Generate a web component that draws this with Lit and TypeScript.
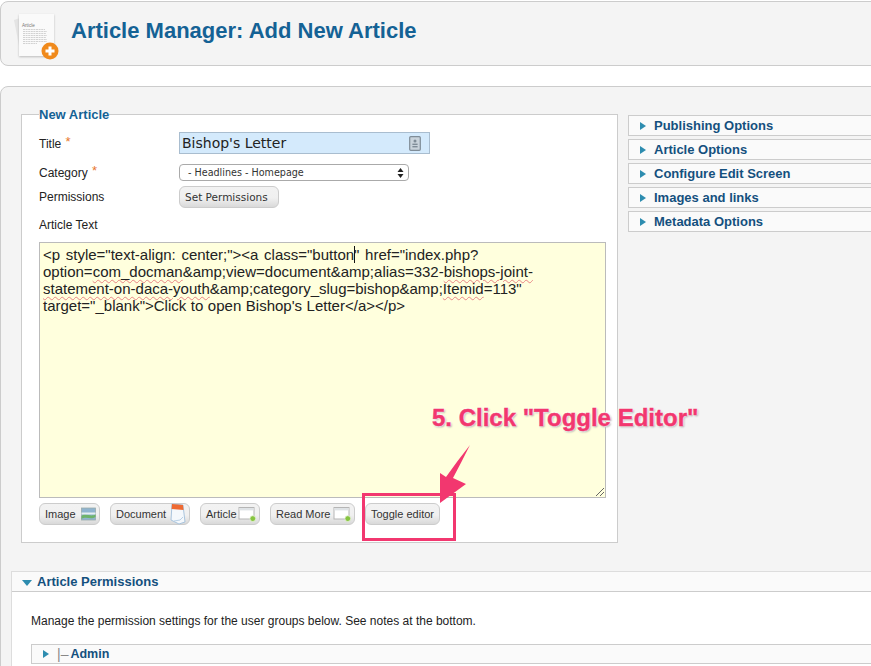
import { LitElement, html, css, svg } from "lit";
import { customElement } from "lit/decorators.js";

const arrow = html`<span class="arr"></span>`;

const docIcon = svg`<svg class="logo" width="62" height="58" viewBox="0 0 62 58">
  <defs><filter id="s" x="-20%" y="-20%" width="140%" height="140%"><feGaussianBlur stdDeviation="1.2"/></filter></defs>
  <path d="M13 15 L19 13 L24 50 L20 51 Z" fill="#e4e4e4"/>
  <rect x="18" y="10" width="35" height="42" fill="#bbb" filter="url(#s)"/>
  <rect x="18" y="9" width="35" height="42" fill="#fafafa"/>
  <text x="21" y="22" font-size="4.6" font-family="Liberation Sans" fill="#777">Article</text>
  <path d="M22 24.5h22M22 26.5h24M22 28.5h23M22 30.5h24M22 32.5h23M22 34.5h24M22 36.5h24M22 38.5h14" stroke="#aaa" stroke-width=".5" stroke-dasharray="2 .6"/>
  <circle cx="49" cy="46" r="8.5" fill="#f08a1c"/>
  <path d="M49 41.5v9M44.5 46h9" stroke="#fff" stroke-width="3"/>
</svg>`;

const imgIcon = svg`<svg width="15" height="14" viewBox="0 0 15 14"><rect x=".5" y="1" width="14" height="12" fill="#8fb4cf" stroke="#9aa" stroke-width=".8"/><path d="M.5 9 C5 5 10 11 14.5 7 V10 C10 13 5 9 .5 12Z" fill="#6eb36a"/><rect x=".5" y="5.5" width="14" height="2" fill="#e6eef2"/></svg>`;
const docuIcon = svg`<svg width="18" height="22" viewBox="0 0 18 22"><path d="M3 1 L14 2 L16 19 L10 21 L2 17Z" fill="#f4f8fc" stroke="#a9c4dd"/><path d="M3 1 L14 2 L14.5 7 L2.6 6Z" fill="#ee6a32"/><path d="M5 18l6-1 3-3" fill="none" stroke="#b8d0e6"/></svg>`;
const addIcon = svg`<svg width="19" height="16" viewBox="0 0 19 16"><rect x="1" y="1.5" width="15" height="11.5" fill="#fff" stroke="#b5b5b5"/><rect x="1.5" y="2" width="14" height="2.4" fill="#dfe3e6"/><circle cx="14.8" cy="12.6" r="2.9" fill="#86c440" stroke="#e8f4d8" stroke-width=".8"/></svg>`;

@customElement("app-root")
export class AppRoot extends LitElement {
  static styles = css`
    :host { display: block; }
    * { box-sizing: border-box; }
    .page { position: relative; width: 871px; height: 666px; overflow: hidden; background: #fff; font-family: "Liberation Sans", Arial, sans-serif; padding-top: 1px; color: #222; }
    .header { height: 65px; margin-right: -12px; background: #f4f4f4; border: 1px solid #ccc; border-radius: 8px; display: flex; align-items: center; gap: 8px; padding: 0; }
    .logo { flex: none; }
    h1 { margin: 0 0 5px; font-size: 22px; line-height: 30px; font-weight: bold; color: #146295; }
    .main { margin-top: 20px; margin-right: -12px; height: 600px; background: #f4f4f4; border: 1px solid #ccc; border-radius: 8px; padding: 20px 0 0 20px; }
    .cols { display: flex; align-items: flex-start; gap: 10px; }
    fieldset { flex: none; width: 597px; height: 436px; margin: 0; padding: 8px 11px 0 17px; background: #fff; border: 1px solid #ccc; min-width: 0; }
    legend { padding: 0; margin: 0; font-size: 13px; line-height: 15px; font-weight: bold; color: #146295; }
    .row { display: flex; align-items: center; font-size: 12px; color: #222; }
    .lab { width: 140px; flex: none; }
    .req { color: #e8772e; font-size: 13px; position: relative; top: -2px; margin-left: 1px; }
    .r1 { height: 22px; margin-top: 2px; }
    .r2 { height: 17px; margin-top: 10px; }
    .r3 { height: 22px; margin-top: 5px; }
    .r4 { height: 16px; margin-top: 9px; margin-bottom: 9px; }
    .title-in { width: 251px; height: 22px; background: #d4eafc; border: 1px solid #a9bdcf; display: flex; align-items: center; justify-content: space-between; padding: 0 8px 0 2px; font-family: "DejaVu Sans", sans-serif; font-size: 14px; color: #222; }
    .sel { width: 230px; height: 17px; background: #fff; border: 1px solid #aaa; border-radius: 4px; display: flex; align-items: center; justify-content: space-between; padding: 0 4px 0 8px; font-family: "DejaVu Sans", sans-serif; font-size: 9.6px; color: #333; }
    .btn { display: inline-flex; align-items: center; height: 22px; padding: 0 10px 0 5px; border: 1px solid #ccc; border-radius: 6px; background: linear-gradient(#f2f2f2, #f0f0f0 55%, #d9d9d9); font-size: 10.5px; color: #333; white-space: nowrap; font-family: "DejaVu Sans", sans-serif; }
    .editor { width: 567px; height: 256px; background: #ffffdd; border: 1px solid #bbb; padding: 3px 3px; font-size: 15px; line-height: 17px; color: #222; position: relative; }
    .editor p { margin: 0; white-space: nowrap; }
    .editor .l1 { word-spacing: 1.5px; }
    .editor .l4 { word-spacing: 0.4px; }
    .sp { text-decoration: underline wavy #e98585 1px; text-underline-offset: 2px; }
    .caret { border-left: 1px solid #111; margin-right: -1px; }
    .grip { position: absolute; right: 0; bottom: 0; }
    .tools { display: flex; gap: 10px; margin-top: 5px; }
    .tools .btn { font-family: "Liberation Sans", sans-serif; font-size: 11px; justify-content: space-between; padding: 0 2px 0 5px; }
    .tools .w-image { width: 61px; padding-right: 3px; }
    .tools .w-doc { width: 80px; }
    .tools .w-art { width: 60px; }
    .tools .w-more { width: 85px; }
    .tools .w-tog { width: 75px; justify-content: center; padding: 0; }
    .side { flex: 1; display: flex; flex-direction: column; gap: 3px; padding-top: 8px; }
    .acc { height: 21px; background: #fafafa; border: 1px solid #ccc; display: flex; align-items: center; padding-left: 11px; gap: 8px; font-size: 13px; font-weight: bold; color: #14507e; }
    .arr { width: 0; height: 0; border-left: 6px solid #2d8caf; border-top: 4.5px solid transparent; border-bottom: 4.5px solid transparent; flex: none; }
    .perm { margin: 28px 0 0 -10px; border: 1px solid #ddd; border-right: none; background: #fff; height: 120px; }
    .perm-h { height: 20px; background: #fafafa; border-bottom: 1px solid #ccc; display: flex; align-items: center; gap: 5px; padding-left: 10px; font-size: 13px; font-weight: bold; color: #14507e; }
    .down { width: 0; height: 0; border-top: 6px solid #2d8caf; border-left: 5px solid transparent; border-right: 5px solid transparent; margin-top: 2px; }
    .note { margin: 22px 0 0 19px; font-size: 12px; line-height: 14px; color: #222; }
    .admin { margin: 16px 0 0 19px; height: 20px; background: #fafafa; border: 1px solid #ccc; border-right: none; display: flex; align-items: center; padding-left: 11px; font-size: 12.5px; font-weight: bold; color: #14507e; }
    .tree { font-weight: normal; color: #888; margin: 0 2px 0 8px; font-size: 14px; }
    .hl { position: absolute; left: 362px; top: 493px; width: 94px; height: 48px; border: 3px solid #f2376f; }
    .shape { position: absolute; left: 0; top: 0; pointer-events: none; }
    .callout { position: absolute; left: 432px; top: 403px; font-size: 24px; line-height: 30px; font-weight: bold; color: #f2376f; -webkit-text-stroke: 0.4px #f2376f; white-space: nowrap; text-shadow: 0 0 2px #fff, 0 0 2px #fff, 0 0 3px #fff, 1px 1px 2px #888; }
  `;

  render() {
    return html`<div class="page">
      <div class="header">${docIcon}<h1>Article Manager: Add New Article</h1></div>
      <div class="main">
        <div class="cols">
          <fieldset>
            <legend>New Article</legend>
            <div class="row r1"><span class="lab">Title <span class="req">*</span></span>
              <div class="title-in"><span>Bishop's Letter</span>
                <svg width="12" height="15" viewBox="0 0 12 15"><rect x=".7" y=".7" width="10.6" height="13.6" rx="1" fill="#c9d3db" stroke="#7f8c97" stroke-width="1.2"/><circle cx="6" cy="5" r="1.5" fill="#7f8c97"/><rect x="3.4" y="7.6" width="5.2" height="1.4" fill="#7f8c97"/><rect x="3.4" y="10" width="5.2" height="1.4" fill="#7f8c97"/></svg>
              </div></div>
            <div class="row r2"><span class="lab">Category <span class="req">*</span></span>
              <div class="sel"><span>- Headlines - Homepage</span>
                <svg width="7" height="10" viewBox="0 0 7 10"><path d="M3.5 0L6.5 4H.5ZM3.5 10L.5 6h6Z" fill="#222"/></svg>
              </div></div>
            <div class="row r3"><span class="lab">Permissions</span><span class="btn">Set Permissions</span></div>
            <div class="row r4"><span class="lab">Article Text</span></div>
            <div class="editor">
              <p class="l1">&lt;p style="text-align: center;"&gt;&lt;a class="button<span class="caret"></span>" href="index.php?</p>
              <p>option=<span class="sp">com_docman</span>&amp;amp;view=document&amp;amp;alias=332-<span class="sp">bishops-joint-</span></p>
              <p><span class="sp">statement-on-daca-youth</span>&amp;amp;category_slug=bishop&amp;amp;<span class="sp">Itemid</span>=113"</p>
              <p class="l4">target="_blank"&gt;Click to open Bishop's Letter&lt;/a&gt;&lt;/p&gt;</p>
              <svg class="grip" width="10" height="10" viewBox="0 0 10 10"><path d="M1 9L9 1M5 9L9 5" stroke="#666" fill="none"/></svg>
            </div>
            <div class="tools">
              <span class="btn w-image">Image ${imgIcon}</span>
              <span class="btn w-doc">Document ${docuIcon}</span>
              <span class="btn w-art">Article ${addIcon}</span>
              <span class="btn w-more">Read More ${addIcon}</span>
              <span class="btn w-tog">Toggle editor</span>
            </div>
          </fieldset>
          <div class="side">
            ${["Publishing Options", "Article Options", "Configure Edit Screen", "Images and links", "Metadata Options"].map((t) => html`<div class="acc">${arrow}<span>${t}</span></div>`)}
          </div>
        </div>
        <div class="perm">
          <div class="perm-h"><span class="down"></span><span>Article Permissions</span></div>
          <div class="note">Manage the permission settings for the user groups below. See notes at the bottom.</div>
          <div class="admin">${arrow}<span class="tree">|–</span>Admin</div>
        </div>
      </div>
      <div class="hl"></div>
      <svg class="shape" width="871" height="666" viewBox="0 0 871 666"><path d="M470 445 Q461 463 453 478 L466 484 L440 503 L440 473 L446 477 Q458 460 470 445Z" fill="#f2376f"/></svg>
      <div class="callout">5. Click "Toggle Editor"</div>
    </div>`;
  }
}
